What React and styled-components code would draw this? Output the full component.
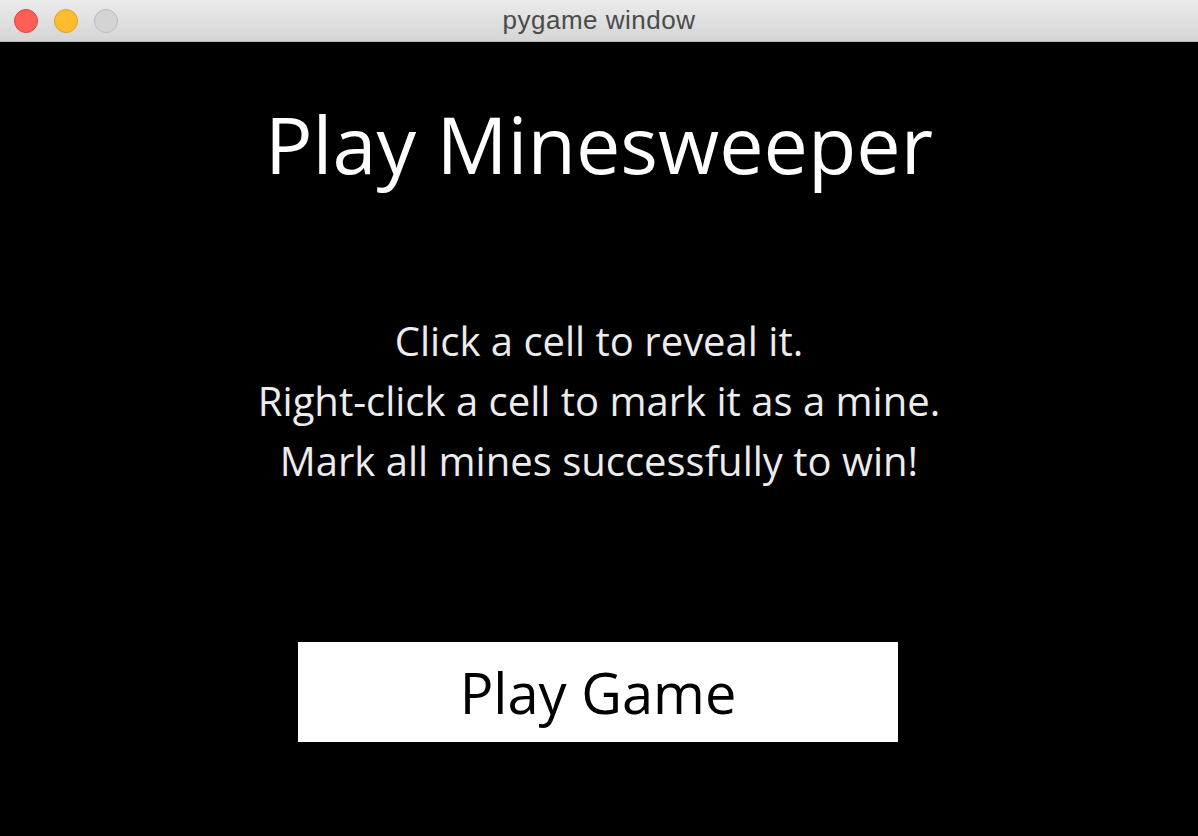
import styled, { createGlobalStyle } from "styled-components";

const GlobalStyle = createGlobalStyle`
  html, body {
    margin: 0;
    padding: 0;
    background: #000;
  }
  #root {
    width: 1198px;
    height: 836px;
  }
`;

function App() {
  return (
    <Window>
      <GlobalStyle />
      <TitleBar>
        <Lights>
          <Light color="#ff5f57" edge="#e0443e" />
          <Light color="#febc2e" edge="#dea123" />
          <Light color="#d4d4d4" edge="#bcbcbc" />
        </Lights>
        <WindowTitle>pygame window</WindowTitle>
        <span />
      </TitleBar>
      <Screen>
        <Heading>Play Minesweeper</Heading>
        <Instructions>
          <p>Click a cell to reveal it.</p>
          <p>Right-click a cell to mark it as a mine.</p>
          <p>Mark all mines successfully to win!</p>
        </Instructions>
        <PlayBtn>Play Game</PlayBtn>
      </Screen>
    </Window>
  );
}

const Window = styled.div`
  display: flex;
  flex-direction: column;
  width: 1198px;
  height: 836px;
  background: #000;
  overflow: hidden;
`;

const TitleBar = styled.div`
  display: grid;
  grid-template-columns: 1fr auto 1fr;
  align-items: center;
  height: 41px;
  background: linear-gradient(#ebebeb, #d5d5d5);
  border-bottom: 1px solid #b9b9b9;
  flex-shrink: 0;
`;

const Lights = styled.div`
  display: flex;
  gap: 16px;
  padding-left: 14px;
  padding-top: 1px;
`;

const Light = styled.span`
  width: 22px;
  height: 22px;
  border-radius: 50%;
  background: ${(p) => p.color};
  border: 1px solid ${(p) => p.edge};
`;

const WindowTitle = styled.div`
  font-family: "Liberation Sans", Arial, sans-serif;
  font-size: 26px;
  letter-spacing: 0.5px;
  color: #4b4b4b;
`;

const Screen = styled.div`
  display: flex;
  flex-direction: column;
  align-items: center;
  padding-top: 47px;
  font-family: "Open Sans", sans-serif;
`;

const Heading = styled.h1`
  margin: 0;
  font-size: 79px;
  font-weight: 400;
  line-height: 109px;
  color: #fff;
`;

const Instructions = styled.div`
  margin-top: 113px;
  text-align: center;

  > p {
    margin: 0;
    font-size: 40px;
    line-height: 60px;
    color: #ececec;
  }
`;

const PlayBtn = styled.button`
  margin-top: 151px;
  width: 600px;
  height: 100px;
  border: none;
  background: #fff;
  color: #000;
  font-family: "Open Sans", sans-serif;
  font-size: 56px;
  line-height: 96px;
  padding: 0;
  margin-right: 2px;
`;

export default App;
